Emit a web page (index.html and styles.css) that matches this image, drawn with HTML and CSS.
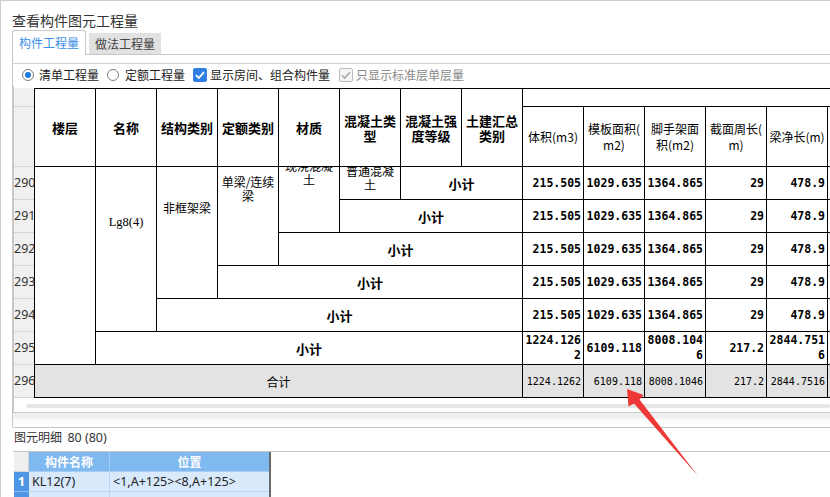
FILE: index.html
```html
<!DOCTYPE html>
<html lang="zh-CN">
<head>
<meta charset="utf-8">
<title>查看构件图元工程量</title>
<link rel="stylesheet" href="styles.css">
</head>
<body>
<div class="window">
  <div class="title">查看构件图元工程量</div>
  <div class="tabs">
    <div class="tab active">构件工程量</div>
    <div class="tab-gap"></div>
    <div class="tab">做法工程量</div>
    <div class="tab-fill"></div>
  </div>
  <div class="panel">
    <div class="options">
      <span class="radio on"></span><span class="opt-text first">清单工程量</span>
      <span class="radio second"></span><span class="opt-text">定额工程量</span>
      <span class="check on"><svg viewBox="0 0 14 14" width="14" height="14"><path d="M3 7.2 L5.8 10 L11 4.2" fill="none" stroke="#fff" stroke-width="1.8"/></svg></span><span class="opt-text">显示房间、组合构件量</span>
      <span class="check off"><svg viewBox="0 0 14 14" width="14" height="14"><path d="M3 7.2 L5.8 10 L11 4.2" fill="none" stroke="#a9a9a9" stroke-width="1.6"/></svg></span><span class="opt-text dim">只显示标准层单层量</span>
    </div>
    <div class="grid-area">
      <div class="grid-row">
        <div class="rowhdr">
          <div class="rh rh-top"></div>
          <div class="rh rh-head"></div>
          <div class="rh">290</div>
          <div class="rh">291</div>
          <div class="rh">292</div>
          <div class="rh">293</div>
          <div class="rh">294</div>
          <div class="rh">295</div>
          <div class="rh">296</div>
        </div>
        <div class="table-clip">
          <div class="qt">
            <div class="c hd">楼层</div>
            <div class="c hd">名称</div>
            <div class="c hd">结构类别</div>
            <div class="c hd">定额类别</div>
            <div class="c hd">材质</div>
            <div class="c hd">混凝土类型</div>
            <div class="c hd">混凝土强度等级</div>
            <div class="c hd">土建汇总类别</div>
            <div class="c group"></div>
            <div class="c hn">体积(m3)</div>
            <div class="c hn">模板面积(<br>m2)</div>
            <div class="c hn">脚手架面<br>积(m2)</div>
            <div class="c hn">截面周长(<br>m)</div>
            <div class="c hn">梁净长(m)</div>
            <div class="c hn"></div>

            <div class="c m-floor"></div>
            <div class="c m-name"><span class="lg">Lg8(4)</span></div>
            <div class="c m-struct">非框架梁</div>
            <div class="c m-quota">单梁/连续梁</div>
            <div class="c m-mat"><div class="clip-a">现浇混凝土</div></div>
            <div class="c m-ctype"><div class="clip-b">普通混凝土</div></div>
            <div class="c sub s290">小计</div>
            <div class="c n">215.505</div>
            <div class="c n">1029.635</div>
            <div class="c n">1364.865</div>
            <div class="c n">29</div>
            <div class="c n">478.9</div>
            <div class="c n"></div>

            <div class="c sub s291">小计</div>
            <div class="c n">215.505</div>
            <div class="c n">1029.635</div>
            <div class="c n">1364.865</div>
            <div class="c n">29</div>
            <div class="c n">478.9</div>
            <div class="c n"></div>

            <div class="c sub s292">小计</div>
            <div class="c n">215.505</div>
            <div class="c n">1029.635</div>
            <div class="c n">1364.865</div>
            <div class="c n">29</div>
            <div class="c n">478.9</div>
            <div class="c n"></div>

            <div class="c sub s293">小计</div>
            <div class="c n">215.505</div>
            <div class="c n">1029.635</div>
            <div class="c n">1364.865</div>
            <div class="c n">29</div>
            <div class="c n">478.9</div>
            <div class="c n"></div>

            <div class="c sub s294">小计</div>
            <div class="c n">215.505</div>
            <div class="c n">1029.635</div>
            <div class="c n">1364.865</div>
            <div class="c n">29</div>
            <div class="c n">478.9</div>
            <div class="c n"></div>

            <div class="c sub s295">小计</div>
            <div class="c n">1224.1262</div>
            <div class="c n">6109.118</div>
            <div class="c n">8008.1046</div>
            <div class="c n">217.2</div>
            <div class="c n">2844.7516</div>
            <div class="c n"></div>

            <div class="c total">合计</div>
            <div class="c n sum">1224.1262</div>
            <div class="c n sum">6109.118</div>
            <div class="c n sum">8008.1046</div>
            <div class="c n sum">217.2</div>
            <div class="c n sum">2844.7516</div>
            <div class="c n sum"></div>
          </div>
        </div>
      </div>
      <div class="hscroll"></div>
    </div>
  </div>
  <div class="splitter"></div>
  <div class="detail">
    <div class="detail-title">图元明细&nbsp;&nbsp;<span class="cnt">80 (80)</span></div>
    <div class="mini">
      <div class="mgrid">
        <div class="mh-rh"></div>
        <div class="mh">构件名称</div>
        <div class="mh last">位置</div>
        <div class="mrh">1</div>
        <div class="mc">KL12(7)</div>
        <div class="mc last">&lt;1,A+125&gt;&lt;8,A+125&gt;</div>
        <div class="mrh"></div>
        <div class="mc"></div>
        <div class="mc last"></div>
      </div>
    </div>
  </div>
</div>
<svg class="arrow" viewBox="0 0 830 497" width="830" height="497">
  <polygon points="627,389 643.5,395 639.5,399.5 698,476 634,403.5 628.5,406.5" fill="#ee3838"/>
</svg>
</body>
</html>
```

FILE: styles.css
```css
* { box-sizing: border-box; margin: 0; padding: 0; }
html, body { width: 830px; height: 497px; overflow: hidden; background: #fff; }
body { position: relative; font-family: "Noto Sans CJK SC", "Noto Sans", sans-serif; color: #222; }

.window { height: 497px; border-top: 1px solid #cdcdcd; border-left: 1px solid #cdcdcd; overflow: hidden; }

.title { height: 29px; padding: 9px 0 0 11px; line-height: 20px; font-size: 14px; color: #333; }

.tabs { display: flex; align-items: flex-end; height: 25px; margin-left: 11px; }
.tab { width: 72px; height: 22px; background: #e1e1e1; border-bottom: 1px solid #c8c8c8; font-size: 12px; line-height: 21px; text-align: center; color: #444; }
.tab.active { width: 74px; height: 25px; background: #fff; border: 1px solid #c8c8c8; border-bottom: none; border-radius: 3px 3px 0 0; color: #3a8ee6; line-height: 23px; }
.tab-gap { width: 3px; height: 1px; border-bottom: 1px solid #c8c8c8; }
.tab-fill { flex: 1; height: 1px; border-bottom: 1px solid #c8c8c8; }

.panel { margin-left: 11px; border-left: 1px solid #c8c8c8; border-bottom: 1px solid #c8c8c8; padding-top: 8px; }

.options { display: flex; align-items: center; height: 23px; border-top: 1px solid #d2d2d2; padding-left: 9px; font-size: 12px; color: #222; }
.radio { width: 12px; height: 12px; border: 1px solid #7e7e7e; border-radius: 50%; background: #fff; display: inline-flex; align-items: center; justify-content: center; flex: none; }
.radio.on::after { content: ""; width: 6px; height: 6px; border-radius: 50%; background: #1f7be0; }
.radio.second { margin-left: 8px; }
.opt-text { margin-left: 5px; line-height: 16px; white-space: nowrap; }
.opt-text.dim { color: #8a8a8a; margin-left: 3px; }
.check { width: 14px; height: 14px; border-radius: 2px; display: inline-flex; flex: none; margin-left: 8px; }
.check + .opt-text { margin-left: 3px; }
.check.on { background: #2f80e0; }
.check.off { background: #f4f4f4; border: 1px solid #bcbcbc; margin-left: 9px; }
.check.off svg { margin: -1px; }
.radio.second + .opt-text { margin-left: 6px; }

.grid-area { border-left: 1px solid #c8c8c8; padding: 2px 0 4px; }
.grid-row { display: flex; }
.rowhdr { width: 20px; flex: none; background: #f0f0f0; }
.rh { height: 33px; border-bottom: 1px solid #d6d6d6; font-family: "Noto Sans", sans-serif; font-size: 12.5px; line-height: 32px; color: #333; white-space: nowrap; overflow: hidden; }
.rh-top { height: 19px; }
.rh-head { height: 60px; }
.table-clip { flex: 1; min-width: 0; overflow: hidden; }

.qt { display: grid; grid-template-columns: repeat(14, 61px); grid-template-rows: 18px 60px repeat(7, 33px); width: max-content; border-top: 1px solid #000; border-left: 1px solid #000; color: #000; }
.c { border-right: 1px solid #000; border-bottom: 1px solid #000; display: flex; align-items: center; justify-content: center; text-align: center; overflow: hidden; font-size: 12px; line-height: 15px; padding: 0 2px; }
.hd { grid-row: 1 / 3; font-weight: bold; font-size: 13px; line-height: 15px; }
.group { grid-column: 9 / 15; grid-row: 1; }
.hn { font-size: 12px; line-height: 16px; padding: 0 1px; }

.m-floor { grid-column: 1; grid-row: 3 / 9; }
.m-name { grid-column: 2; grid-row: 3 / 8; align-items: flex-start; padding-top: 48px; }
.lg { font-family: "Liberation Serif", serif; font-size: 12.5px; line-height: 15px; }
.m-struct { grid-column: 3; grid-row: 3 / 7; align-items: flex-start; padding-top: 33px; }
.m-quota { grid-column: 4; grid-row: 3 / 6; align-items: flex-start; padding-top: 8px; line-height: 14px; }
.m-mat { grid-column: 5; grid-row: 3 / 5; align-items: flex-start; }
.clip-a { margin-top: -8px; line-height: 14px; }
.m-ctype { grid-column: 6; grid-row: 3; align-items: flex-start; }
.clip-b { margin-top: -3px; line-height: 14px; }

.sub { font-weight: bold; font-size: 13px; }
.s290 { grid-column: 7 / 9; grid-row: 3; }
.s291 { grid-column: 6 / 9; grid-row: 4; }
.s292 { grid-column: 5 / 9; grid-row: 5; }
.s293 { grid-column: 4 / 9; grid-row: 6; }
.s294 { grid-column: 3 / 9; grid-row: 7; }
.s295 { grid-column: 2 / 9; grid-row: 8; }
.total { grid-column: 1 / 9; grid-row: 9; background: #e3e3e3; font-size: 12px; }

.n { justify-content: flex-end; text-align: right; padding: 0 2px 0 0; font-family: "DejaVu Sans Mono", monospace; font-weight: bold; font-size: 11.5px; line-height: 15px; word-break: break-all; }
.n.sum { background: #e3e3e3; font-weight: normal; font-size: 10px; }

.hscroll { height: 4px; margin: 6px 0 0 12px; background: #e5e5e5; border-radius: 2px; }

.splitter { height: 14px; margin-left: 11px; border-left: 1px solid #c8c8c8; background: linear-gradient(#efefef 0, #efefef 5px, #fbfbfb 6px, #fff 100%); }

.detail { margin-left: 12px; border-top: 1px solid #c8c8c8; }
.detail-title { padding: 0 0 6px 1px; line-height: 17px; height: 23px; font-size: 12px; color: #333; white-space: nowrap; }
.cnt { font-family: "Noto Sans", sans-serif; font-size: 12.5px; }
.mini { border-top: 1px solid #c8c8c8; padding-left: 1px; }
.mgrid { display: grid; grid-template-columns: 15px 81px 159px; grid-auto-rows: 20px; width: max-content; border-right: 2px solid #6a6a6a; }
.mh-rh { background: #efefef; border-right: 1px solid #d4d4d4; border-bottom: 1px solid #d4d4d4; }
.mh { background: #80b8f0; color: #fff; font-weight: bold; font-size: 12px; line-height: 19px; text-align: center; border-right: 1px solid #a8cdf4; border-bottom: 1px solid #a8cdf4; }
.mrh { background: #4f95e6; color: #fff; font-weight: bold; font-size: 13px; line-height: 19px; text-align: center; font-family: "Noto Sans", sans-serif; border-bottom: 1px solid #8dbcef; }
.mc { background: #d7e9fb; color: #222; font-family: "Noto Sans", "Noto Sans CJK SC", sans-serif; font-size: 12.5px; line-height: 19px; padding-left: 3px; white-space: nowrap; border-right: 1px solid #bcd6f2; border-bottom: 1px solid #bcd6f2; }
.mh.last, .mc.last { border-right: none; }

.arrow { position: absolute; left: 0; top: 0; pointer-events: none; }
```
